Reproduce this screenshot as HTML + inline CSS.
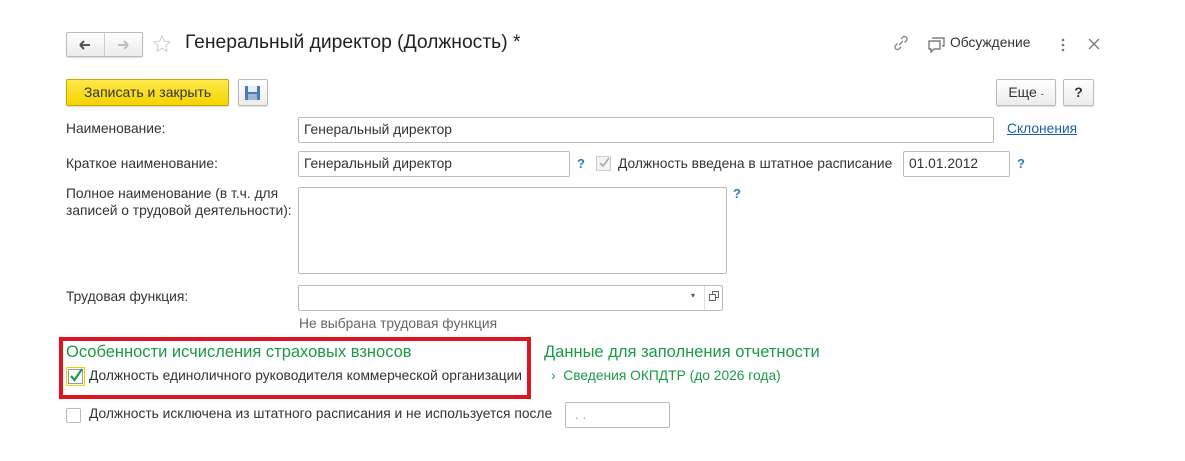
<!DOCTYPE html>
<html><head><meta charset="utf-8"><style>
*{box-sizing:border-box;margin:0;padding:0}
body{width:1185px;height:461px;background:#fff;font-family:"Liberation Sans",Arial,sans-serif;font-size:13.8px;color:#333;position:relative;overflow:hidden}
.a{position:absolute;white-space:nowrap}
.inp{position:absolute;border:1px solid #bbb;border-radius:2px;background:#fff;padding:0 5px;line-height:23px;color:#333}
.btn{position:absolute;border:1px solid #bbb;border-radius:2px;background:linear-gradient(#fff,#ececec);box-shadow:0 1px 1px rgba(0,0,0,.15);text-align:center}
.q{position:absolute;color:#2a7fbf;font-weight:bold;font-size:13px}
.g{color:#1c9a46}
</style></head><body>
<div class="btn" style="left:66px;top:32px;width:77px;height:25px"></div>
<div class="a" style="left:104px;top:33px;width:1px;height:23px;background:#ccc"></div>
<svg class="a" style="left:76px;top:38px" width="60" height="14"><path d="M4 7h10M4 7l4-4M4 7l4 4" stroke="#555" stroke-width="2" fill="none"/><path d="M42 7h10M52 7l-4-4M52 7l-4 4" stroke="#bbb" stroke-width="2" fill="none"/></svg>
<svg class="a" style="left:152px;top:34px" width="20" height="20"><path d="M10 2l2.4 5.2 5.6.6-4.2 3.8 1.2 5.6L10 14.4 5 17.2l1.2-5.6L2 7.8l5.6-.6z" fill="none" stroke="#ccc"/></svg>
<div class="a" style="left:185px;top:32px;font-size:19.3px;color:#222">Генеральный директор (Должность) *</div>
<svg class="a" style="left:892px;top:34px" width="18" height="18"><path d="M7 11l4-4M5.5 9.5l-2 2a2.5 2.5 0 003.5 3.5l2-2M12.5 8.5l2-2a2.5 2.5 0 00-3.5-3.5l-2 2" stroke="#888" stroke-width="1.4" fill="none"/></svg>
<svg class="a" style="left:927px;top:35px" width="20" height="18"><path d="M5 3h12v8h-2M2 6h11v8H7l-3 3v-3H2z" stroke="#666" stroke-width="1.2" fill="#fff"/></svg>
<div class="a" style="left:950px;top:35px;font-size:13.8px">Обсуждение</div>
<svg class="a" style="left:1060px;top:37px" width="6" height="16"><circle cx="3" cy="3" r="1.3" fill="#777"/><circle cx="3" cy="8" r="1.3" fill="#777"/><circle cx="3" cy="13" r="1.3" fill="#777"/></svg>
<svg class="a" style="left:1087px;top:37px" width="14" height="14"><path d="M2 2l10 10M12 2L2 12" stroke="#777" stroke-width="1.3"/></svg>

<div class="btn" style="left:66px;top:79px;width:163px;height:27px;background:linear-gradient(#ffe94a,#f5d400);border-color:#c8a800;line-height:25px;font-size:14px;color:#333">Записать и закрыть</div>
<div class="btn" style="left:238px;top:79px;width:30px;height:27px"></div>
<svg class="a" style="left:244px;top:85px" width="17" height="16"><rect x="1" y="1" width="15" height="14" fill="#4a7bb3"/><rect x="4" y="1" width="9" height="6" fill="#e8eef5"/><rect x="4" y="9" width="9" height="6" fill="#9db6d4"/></svg>
<div class="btn" style="left:996px;top:79px;width:60px;height:27px;line-height:25px;font-size:14px">Еще <span style="font-size:9px">-</span></div>
<div class="btn" style="left:1063px;top:79px;width:31px;height:27px;line-height:25px;font-weight:bold;font-size:14px">?</div>

<div class="a" style="left:66px;top:121px">Наименование:</div>
<div class="inp" style="left:298px;top:117px;width:696px;height:26px">Генеральный директор</div>
<div class="a" style="left:1007px;top:121px;color:#1c5fa8;text-decoration:underline">Склонения</div>

<div class="a" style="left:66px;top:156px">Краткое наименование:</div>
<div class="inp" style="left:298px;top:151px;width:272px;height:26px">Генеральный директор</div>
<div class="q" style="left:577px;top:156px">?</div>
<div class="a" style="left:596px;top:156px;width:15px;height:15px;border:1px solid #ccc;background:#f4f4f4"></div>
<svg class="a" style="left:597px;top:155px" width="15" height="15"><path d="M3 8l3 3 6-8" stroke="#aaa" stroke-width="1.6" fill="none"/></svg>
<div class="a" style="left:618px;top:156px">Должность введена в штатное расписание</div>
<div class="inp" style="left:903px;top:151px;width:107px;height:26px">01.01.2012</div>
<div class="q" style="left:1017px;top:156px">?</div>

<div class="a" style="left:66px;top:185px;line-height:17px">Полное наименование (в т.ч. для<br>записей о трудовой деятельности):</div>
<div class="inp" style="left:298px;top:187px;width:429px;height:87px"></div>
<div class="q" style="left:733px;top:186px">?</div>

<div class="a" style="left:66px;top:289px">Трудовая функция:</div>
<div class="inp" style="left:298px;top:285px;width:425px;height:26px"></div>
<div class="a" style="left:704px;top:286px;width:1px;height:24px;background:#ddd"></div>
<div class="a" style="left:691px;top:291px;font-size:8px;color:#555">▾</div>
<svg class="a" style="left:709px;top:291px" width="11" height="11"><rect x="3.5" y=".5" width="6" height="6" fill="none" stroke="#666"/><rect x=".5" y="3.5" width="6" height="6" fill="#fff" stroke="#666"/></svg>
<div class="a" style="left:299px;top:316px;color:#666">Не выбрана трудовая функция</div>

<div class="a" style="left:59px;top:337px;width:472px;height:62px;border:4px solid #e0141e"></div>
<div class="a g" style="left:66px;top:343px;font-size:16.5px">Особенности исчисления страховых взносов</div>
<div class="a" style="left:66px;top:367px;width:19px;height:19px;border:1px solid #f0d000;background:#fff"></div>
<div class="a" style="left:68px;top:369px;width:15px;height:15px;border:1px solid #999"></div>
<svg class="a" style="left:68px;top:367px" width="16" height="16"><path d="M3 9l3.5 4L14 2" stroke="#1c9a46" stroke-width="2.2" fill="none"/></svg>
<div class="a" style="left:89px;top:368px">Должность единоличного руководителя коммерческой организации</div>

<div class="a g" style="left:544px;top:343px;font-size:16.5px">Данные для заполнения отчетности</div>
<div class="a g" style="left:551px;top:368px">›&nbsp;&nbsp;Сведения ОКПДТР (до 2026 года)</div>

<div class="a" style="left:66px;top:408px;width:15px;height:15px;border:1px solid #bbb;border-radius:2px"></div>
<div class="a" style="left:89px;top:406px">Должность исключена из штатного расписания и не используется после</div>
<div class="inp" style="left:565px;top:402px;width:105px;height:26px;color:#aaa">&nbsp;. .</div>
</body></html>
